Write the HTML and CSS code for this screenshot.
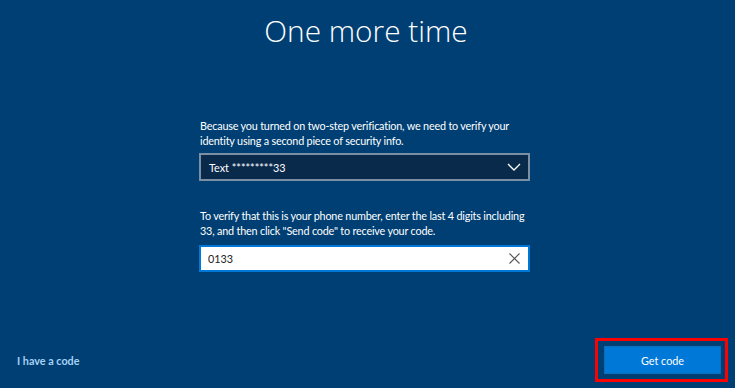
FILE: index.html
```html
<!DOCTYPE html>
<html>
<head>
<meta charset="utf-8">
<link rel="stylesheet" href="styles.css">
</head>
<body>
<div class="page">
  <h1 class="title">One more time</h1>
  <div class="form">
    <p class="info">Because you turned on two-step verification, we need to verify your<br>identity using a second piece of security info.</p>
    <div class="select">
      <span>Text *********33</span>
      <svg class="chev" width="14" height="8" viewBox="0 0 14 8"><path d="M1 1 L7 7 L13 1" fill="none" stroke="#fff" stroke-width="1.3"/></svg>
    </div>
    <p class="info second">To verify that this is your phone number, enter the last 4 digits including<br>33, and then click "Send code" to receive your code.</p>
    <div class="input">
      <span>0133</span>
      <svg class="clear" width="11" height="11" viewBox="0 0 11 11"><path d="M0.5 0.5 L10.5 10.5 M10.5 0.5 L0.5 10.5" fill="none" stroke="#555" stroke-width="1.1"/></svg>
    </div>
  </div>
  <div class="footer">
    <a class="link">I have a code</a>
    <div class="highlight"><button class="btn">Get code</button></div>
  </div>
</div>
</body>
</html>
```

FILE: styles.css
```css
html, body {
  margin: 0;
  padding: 0;
}
body {
  width: 735px;
  height: 388px;
  background: #003f73;
  font-family: "Lato", "Noto Sans", sans-serif;
  color: #fff;
  overflow: hidden;
}
.page {
  height: 388px;
  display: flex;
  flex-direction: column;
  box-sizing: border-box;
}
.title {
  margin: 10px 0 0;
  padding-right: 3px;
  text-align: center;
  font-family: "Open Sans", sans-serif;
  font-weight: 300;
  font-size: 29.8px;
  line-height: 42px;
}
.form {
  margin: 66px 0 0 199px;
  width: 331px;
  display: flex;
  flex-direction: column;
}
.info {
  margin: 0 0 0 1px;
  font-size: 10.8px;
  line-height: 15px;
  letter-spacing: -0.18px;
  white-space: nowrap;
}
.info.second {
  margin-top: 27px;
}
.select {
  margin-top: 5px;
  height: 28px;
  box-sizing: border-box;
  border: 2px solid #7a8ea4;
  background: #0a2a4c;
  display: flex;
  align-items: center;
  justify-content: space-between;
  padding: 0 7px 0 8px;
  font-size: 10.8px;
}
.input {
  margin-top: 7px;
  height: 27px;
  box-sizing: border-box;
  border: 2px solid #0078d7;
  background: #fff;
  color: #222;
  display: flex;
  align-items: center;
  justify-content: space-between;
  padding: 0 8px 0 7px;
  font-size: 10.8px;
}
.footer {
  margin-top: auto;
  display: flex;
  justify-content: space-between;
  align-items: center;
  padding: 0 7px 6px 17px;
}
.link {
  color: #a6d2f5;
  font-size: 10.8px;
  font-weight: 700;
  margin-top: 1px;
}
.highlight {
  border: 3px solid #f00;
  padding: 5px 4px 5px 6px;
}
.btn {
  display: block;
  width: 117px;
  height: 28px;
  background: #0078d7;
  border: 1px solid #0a6cbd;
  color: #fff;
  font-family: inherit;
  font-size: 10.8px;
  padding: 0;
}
```
